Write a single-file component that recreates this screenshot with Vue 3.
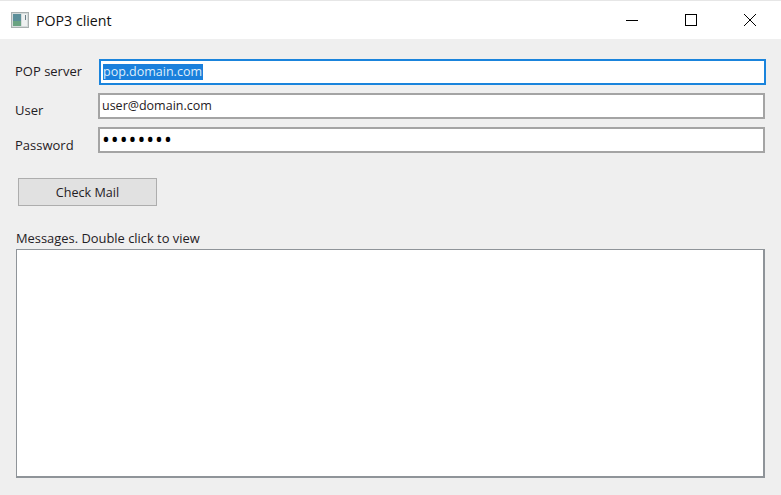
<script setup>
const server = 'pop.domain.com'
const user = 'user@domain.com'
const dots = '••••••••'
</script>

<template>
  <div class="window">
    <header class="titlebar">
      <svg class="appicon" width="18" height="16" viewBox="0 0 18 16">
        <rect x="0.5" y="0.5" width="17" height="15" fill="#d5dbdb" stroke="#a9b0b0"/>
        <rect x="2" y="2" width="8" height="12" fill="#5c8f9a"/>
        <rect x="2" y="9" width="8" height="5" fill="#6aa382"/>
        <rect x="11" y="2" width="5" height="12" fill="#eef1f1"/>
        <rect x="14" y="3" width="1" height="5" fill="#6b7f88"/>
      </svg>
      <span class="title">POP3 client</span>
      <div class="controls">
        <svg width="12" height="12" viewBox="0 0 12 12"><path d="M0 6.5H12" stroke="#000" fill="none"/></svg>
        <svg width="12" height="12" viewBox="0 0 12 12"><rect x="0.5" y="0.5" width="11" height="11" stroke="#000" fill="none"/></svg>
        <svg width="12" height="12" viewBox="0 0 12 12"><path d="M0 0L12 12M12 0L0 12" stroke="#000" fill="none"/></svg>
      </div>
    </header>
    <main class="body">
      <div class="row first">
        <span class="label">POP server</span>
        <div class="field focus"><span class="sel">{{ server }}</span></div>
      </div>
      <div class="row second">
        <span class="label low">User</span>
        <div class="field">{{ user }}</div>
      </div>
      <div class="row third">
        <span class="label lower">Password</span>
        <div class="field pass">{{ dots }}</div>
      </div>
      <button class="check">Check Mail</button>
      <div class="caption">Messages. Double click to view</div>
      <div class="list"></div>
    </main>
  </div>
</template>

<style>
html, body { margin: 0; padding: 0; }
</style>

<style scoped>
.window {
  width: 781px;
  height: 495px;
  box-sizing: border-box;
  display: flex;
  flex-direction: column;
  background: #efefef;
  font-family: "Open Sans", "Noto Sans", sans-serif;
  font-size: 13px;
  color: #1f2024;
  overflow: hidden;
}
.titlebar {
  height: 39px;
  flex: none;
  box-sizing: border-box;
  display: flex;
  align-items: center;
  background: #fff;
  border-top: 1px solid #e6e6e6;
  padding-left: 11px;
}
.appicon { flex: none; }
.title {
  margin-left: 7px;
  font-size: 14.2px;
  color: #111;
}
.controls {
  margin-left: auto;
  display: flex;
  gap: 47px;
  padding-right: 25px;
}
.controls svg { display: block; }
.body {
  flex: 1;
  display: flex;
  flex-direction: column;
  padding: 20px 16px 0 15px;
}
.row {
  display: flex;
  align-items: center;
  height: 26px;
}
.second { margin-top: 8px; }
.third { margin-top: 8px; }
.label {
  width: 83px;
  flex: none;
  line-height: 20px;
}
.low { margin-top: 7px; }
.lower { margin-top: 9px; }
.first .label { width: 85px; margin-top: -3px; }
.field {
  flex: 1;
  box-sizing: border-box;
  height: 26px;
  background: #fff;
  border: 2px solid #a4a4a4;
  padding-left: 2px;
  font-size: 12.5px;
  line-height: 21px;
  white-space: nowrap;
}
.focus {
  border-color: #1a84dc;
  margin-right: -1px;
  margin-left: -1px;
}
.sel {
  background: #1a80dc;
  color: #dfeefa;
  display: inline-block;
  height: 16px;
  line-height: 16px;
  padding-right: 1px;
}
.pass {
  font-size: 21px;
  letter-spacing: 0.95px;
  color: #000;
}
.check {
  align-self: flex-start;
  margin: 25px 0 0 3px;
  width: 139px;
  height: 28px;
  box-sizing: border-box;
  background: #e1e1e1;
  border: 1px solid #adadad;
  font: inherit;
  font-size: 12.6px;
  color: #1f2024;
  padding: 0;
}
.caption {
  margin: 22px 0 0 1px;
  height: 21px;
  line-height: 20px;
  font-size: 12.9px;
}
.list {
  margin: 0 0 0 1px;
  width: 749px;
  height: 229px;
  box-sizing: border-box;
  background: #fff;
  border: 1px solid #8f9499;
  border-bottom-width: 2px;
  border-right-width: 2px;
}
</style>
